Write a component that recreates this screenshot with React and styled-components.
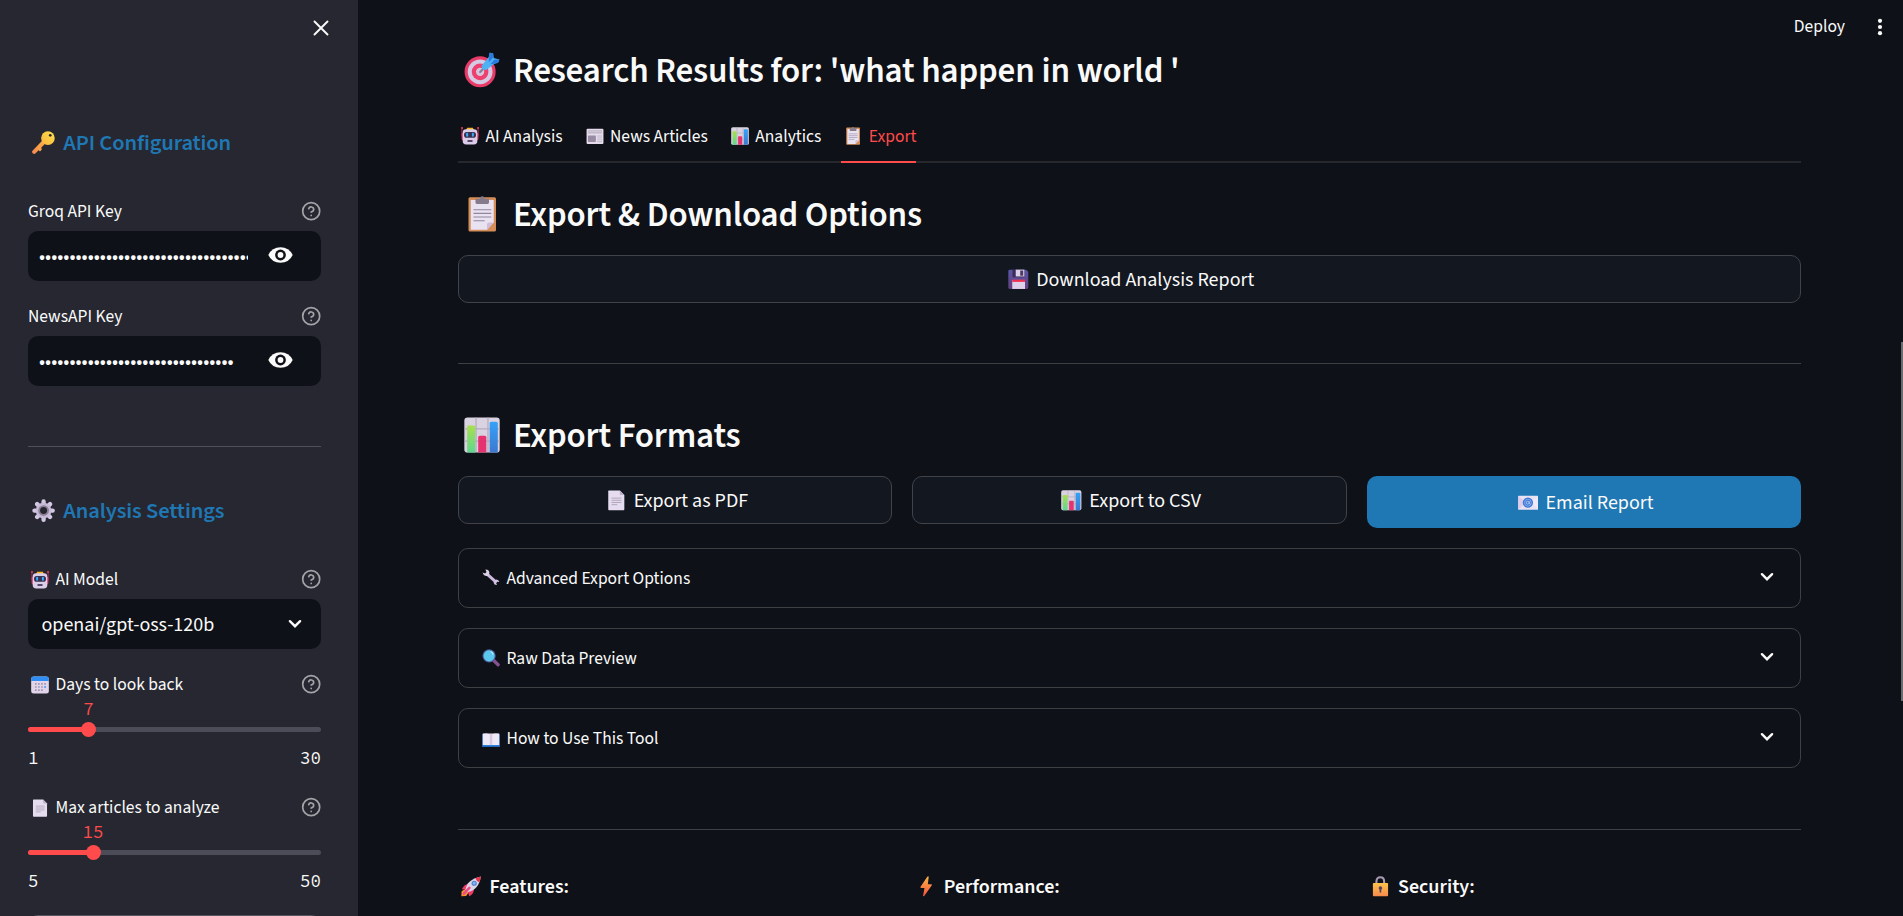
import React from "react";
import styled, { createGlobalStyle } from "styled-components";
import { CircleHelp } from "lucide-react";

const SANS = '"Source Sans Pro", "Source Sans 3", "Noto Sans CJK SC", sans-serif';
const MONO = '"Source Code Pro", "Liberation Mono", monospace';

const GlobalStyle = createGlobalStyle`
  * { box-sizing: border-box; }
  html, body { margin: 0; height: 100%; overflow: hidden; background: #0e1117; }
  body { font-family: ${SANS}; font-size: 20px; color: #fafafa; }
  h2, h3, p { margin: 0; }
  button { font: inherit; color: inherit; }
`;

/* ---------- emoji drawings ---------- */

const Slot = styled.span`
  flex: none;
  display: inline-flex;
  justify-content: center;
  width: 1.37em;
  margin-right: 0.2em;
  margin-bottom: 0.04em;
  svg { display: block; width: 1.03em; height: 1.03em; }
`;

const art = {
  target: (
    <>
      <circle cx="14.3" cy="17.6" r="13.8" fill="#e83b69" />
      <circle cx="14.3" cy="17.6" r="11" fill="#d5cae4" />
      <circle cx="14.3" cy="17.6" r="7.4" fill="#ee3f6e" />
      <circle cx="14.3" cy="17.6" r="3.7" fill="#d5c5dc" />
      <path d="M14.3 17.8 20 12" stroke="#8a7b94" strokeWidth="1.8" strokeLinecap="round" />
      <path d="M15.6 12.2 22 4.4 22.8.6 25.8 1.2 26.4 5.4 31.4 6.6 30.2 9.6 27 10.4 20 15.8Q17.4 16.4 16 14.6Z" fill="#4db2f4" />
      <path d="M22 4.4 22.8.6 25.8 1.2 26.2 4.6 22 9ZM23.4 10.8 27 6.6 31.6 6.8 30.2 9.6 27 10.4Z" fill="#2c7be0" />
    </>
  ),
  robot: (
    <>
      <path d="M1.6 1v15M30.4 1v15" stroke="#b02a55" strokeWidth="1.8" strokeLinecap="round" />
      <circle cx="1.8" cy="1.8" r="1.6" fill="#f23d5e" />
      <circle cx="30.2" cy="1.8" r="1.6" fill="#f23d5e" />
      <rect x="1" y="10" width="30" height="14" rx="3" fill="#d92f60" />
      <path d="M11 1.4h10l2 4H9z" fill="#f9b320" />
      <rect x="3" y="4" width="26" height="27" rx="6" fill="#dacde7" />
      <rect x="5.4" y="9" width="21.2" height="10" rx="4.5" fill="#3c3052" />
      <rect x="9.2" y="10.4" width="3.4" height="7" rx="1.7" fill="#35b0fb" />
      <rect x="19.4" y="10.4" width="3.4" height="7" rx="1.7" fill="#35b0fb" />
      <rect x="11.5" y="23" width="9" height="3.6" rx="1" fill="#59456c" />
    </>
  ),
  news: (
    <>
      <rect x="1" y="3" width="30" height="27" rx="1.8" fill="#e4dcea" />
      <path d="M3.5 7h25M3.5 10.4h25" stroke="#a89cb1" strokeWidth="1.5" />
      <rect x="3.5" y="15" width="14" height="11.5" rx="1" fill="#988ba3" />
      <path d="M20 16h8.5M20 19.4h8.5M20 22.8h8.5M20 26h8.5" stroke="#b7abc0" strokeWidth="1.2" />
    </>
  ),
  chart: (
    <>
      <rect x="0.3" y="0.4" width="31.4" height="31.2" rx="2.8" fill="#d9d2e0" />
      <path d="M10.7.5V31M21.3.5V31M.6 10.6h31M.6 21.4h31" stroke="#b5aabf" strokeWidth="1.1" />
      <path d="M2.8 31.6V9Q2.8 7.6 4.2 7.6H8.6Q10 7.6 10 9V31.6z" fill="url(#barGreen)" />
      <path d="M12.6 31.6V18Q12.6 16.6 14 16.6H18.4Q19.8 16.6 19.8 18V31.6z" fill="#e4336f" />
      <path d="M22.8 31.6V5.6Q22.8 4.2 24.2 4.2H28.6Q30 4.2 30 5.6V31.6z" fill="url(#barBlue)" />
    </>
  ),
  clip: (
    <>
      <rect x="4" y="1" width="24.4" height="30.6" rx="1.4" fill="#d68e59" />
      <path d="M6 3.6h20.4v20L20.4 30H6z" fill="#e9e2f1" />
      <path d="M26.4 23.6h-4.2q-1.8 0-1.8 1.8V30z" fill="#cdbddb" />
      <path d="M8.4 12.2h15.8M8.4 15.4h15.8M8.4 18.6h15.8M8.4 22h10" stroke="#9385a0" strokeWidth="1" />
      <path d="M10.2 2.4h4q.2-2.2 2-2.2t2 2.2h4v3.4q0 1.2-1.2 1.2h-9.6q-1.2 0-1.2-1.2z" fill="#857b8d" />
    </>
  ),
  floppy: (
    <>
      <path d="M.5 3.2Q.5 1 2.7 1H28l3.5 3.4V28.8Q31.5 31 29.3 31H2.7Q.5 31 .5 28.8z" fill="url(#disk)" />
      <path d="M7 1h18.5v10.4q0 1.4-1.4 1.4H8.4q-1.4 0-1.4-1.4z" fill="#3d2b5c" />
      <path d="M12 1h13.4v10.6H12z" fill="#dcd0e6" />
      <rect x="19" y="2.4" width="4.6" height="8" fill="#4a3867" />
      <path d="M6.6 17h19.8v14H6.6z" fill="#dfd0ea" />
      <path d="M6.6 16.6h19.8v3.4H6.6z" fill="#ee2f4f" />
    </>
  ),
  page: (
    <>
      <path d="M4.5.8H21.5L28.5 7.8V30Q28.5 31.4 27.1 31.4H4.9Q3.5 31.4 3.5 30V1.8Q3.5.8 4.5.8z" fill="#e6dcef" />
      <path d="M21.5.8V6.4Q21.5 7.8 22.9 7.8H28.5z" fill="#bdb0c8" />
      <path d="M8.5 12.6h15.5M8.5 16h15.5M8.5 19.4h15.5M8.5 22.8h9" stroke="#a195ac" strokeWidth="1.2" />
    </>
  ),
  email: (
    <>
      <rect x="0.3" y="6" width="31.4" height="21.5" rx="1" fill="#e8e2f3" />
      <path d="M.3 6 12 16.5.3 27.5z" fill="#dccbe9" />
      <path d="M31.7 6 20 16.5 31.7 27.5z" fill="#f1e8f8" />
      <circle cx="15.4" cy="16.6" r="8" fill="#3f7bd8" />
      <circle cx="15.4" cy="16.6" r="5.3" fill="none" stroke="#9db8ee" strokeWidth="1" />
      <circle cx="15" cy="16.6" r="2.2" fill="none" stroke="#c9d7f7" strokeWidth="1.1" />
      <path d="M17.6 14.2v3.2q.2 2 2 1.6" fill="none" stroke="#c9d7f7" strokeWidth="1" />
    </>
  ),
  wrench: (
    <>
      <path d="M9.5 9.5 24.5 23" stroke="#cdbbe0" strokeWidth="5.2" />
      <path d="M1 6.2 5.4 7.8 8 5.2 6 .9Q11.5.6 13.2 5.2 13.8 10.5 9.6 12.4 3.2 13.2 1 6.2z" fill="#ded2e9" />
      <path d="M30.8 23 27.2 22.6 25.2 25.2 26.6 28.6Q21.6 29 20.6 24.6 20.8 19.6 25.4 18.6 30 18.8 30.8 23z" fill="#d4c3e6" />
    </>
  ),
  search: (
    <>
      <path d="M20 19.5 28.6 28" stroke="#84508f" strokeWidth="5.8" strokeLinecap="round" />
      <circle cx="12.6" cy="12.2" r="11.8" fill="#4b609c" />
      <circle cx="12.6" cy="12.2" r="9.8" fill="#5cc7ec" />
      <path d="M16 5q3 1.2 3.6 4.4" stroke="#b9ecf9" strokeWidth="2" strokeLinecap="round" fill="none" />
    </>
  ),
  book: (
    <g transform="translate(0 2.6)">
      <path d="M.5 6.5h31v23H.5z" fill="#3288e0" />
      <path d="M.5 27h14q1.5 2 3 0H31.5v2.5H.5z" fill="#2467b8" />
      <path d="M1.4 5.6Q9 4.5 16 6 23 4.5 30.6 5.6V26H1.4z" fill="#efe9f7" />
      <path d="M13.8 5.4 16 6l2.2-.6V26h-4.4z" fill="#d5cae1" />
    </g>
  ),
  rocket: (
    <>
      <path d="M7 20 1 23.6.5 31.5 8 31 12.5 25z" fill="#f5912e" />
      <path d="M12 12.5Q5 12.5 1.4 20.6L8 21.5z" fill="#ee3b66" />
      <path d="M20 20.5Q20.5 27.5 12.6 31.6L10.8 24.5z" fill="#ee3b66" />
      <path d="M6.8 22.5Q8.5 5.5 30.8.8 28 21.5 9.6 25.4z" fill="#ddd3e7" />
      <path d="M22.5 3.6Q26.5 1.4 31 .7 30.5 5.8 28.2 9.6 24 8.5 22.5 3.6z" fill="#e8354e" />
      <circle cx="20.5" cy="11.2" r="4" fill="#4d83cf" />
      <circle cx="20.5" cy="11.2" r="2.3" fill="#7fb5ef" />
      <path d="M4.5 27.5 13 18.6" stroke="#ee4c86" strokeWidth="4" strokeLinecap="round" />
    </>
  ),
  bolt: <path d="M17.8.6 6.8 17.2Q6.5 18.4 7.8 18.5H13.2L10.8 31.4 12.8 31 24.6 14.4Q25 13 23.6 12.9H18.4L19.8.8z" fill="url(#boltFill)" />,
  lock: (
    <>
      <path d="M10 14V8.5Q10 2 16 2T22 8.5V14" fill="none" stroke="#a79bb2" strokeWidth="3.2" />
      <rect x="4.5" y="10.8" width="23.6" height="20.6" rx="1.4" fill="url(#lockFill)" />
      <circle cx="16.2" cy="18.6" r="2.8" fill="#56425f" />
      <rect x="14.9" y="19.5" width="2.6" height="6.5" rx="1.2" fill="#56425f" />
    </>
  ),
  key: (
    <>
      <path d="M3 28.8 17 14.5" stroke="url(#keyFill)" strokeWidth="5.6" strokeLinecap="round" />
      <path d="M7.5 25 11 28.2 13.6 25.4 12.4 21.6 15.6 20.4 14.5 17z" fill="#f9a048" />
      <circle cx="22" cy="9.8" r="9.4" fill="url(#keyHead)" />
      <circle cx="25.2" cy="6" r="1.9" fill="#272730" />
    </>
  ),
  gear: (
    <>
      <g stroke="#d3c8e2" strokeWidth="6" strokeLinecap="round">
        <path d="M16 3.4V28.6M3.4 16H28.6M7.1 7.1 24.9 24.9M24.9 7.1 7.1 24.9" />
      </g>
      <circle cx="16" cy="16" r="10.8" fill="#c7bbd6" />
      <circle cx="16" cy="16" r="7.4" fill="#8d8299" />
      <circle cx="16" cy="16" r="4.8" fill="#272730" />
    </>
  ),
  calendar: (
    <>
      <rect x="0.3" y="0.8" width="31.4" height="30.4" rx="4.5" fill="#e0d5e9" />
      <path d="M.3 9V5.3Q.3.8 4.8.8H27.2Q31.7.8 31.7 5.3V9z" fill="#2f8df3" />
      <path d="M7 12.5h3v3H7zM12.5 12.5h3v3h-3zM18 12.5h3v3h-3zM23.5 12.5h3v3h-3zM7 18h3v3H7zM12.5 18h3v3h-3zM18 18h3v3h-3zM7 23.5h3v3H7zM12.5 23.5h3v3h-3zM18 23.5h3v3h-3z" fill="#a496b3" />
      <path d="M23.5 18h3v3h-3z" fill="#2f8df3" />
    </>
  ),
};

const Emoji = ({ name }) => (
  <Slot>
    <svg viewBox="0 0 32 32" fill="none" aria-hidden="true">{art[name]}</svg>
  </Slot>
);

const HiddenDefs = styled.svg`position: absolute; width: 0; height: 0;`;

const Gradients = () => (
  <HiddenDefs>
    <defs>
      <linearGradient id="barGreen" x1="0" y1="0" x2="0" y2="1"><stop stopColor="#a8e04e" /><stop offset="1" stopColor="#5fd68f" /></linearGradient>
      <linearGradient id="barBlue" x1="0" y1="0" x2="0" y2="1"><stop stopColor="#34a2f8" /><stop offset="1" stopColor="#3d78cf" /></linearGradient>
      <linearGradient id="disk" x1="0" y1="0" x2="0" y2="1"><stop stopColor="#5a55a4" /><stop offset="1" stopColor="#63407f" /></linearGradient>
      <linearGradient id="boltFill" x1="0" y1="0" x2="0" y2="1"><stop stopColor="#f9b447" /><stop offset="1" stopColor="#f4513c" /></linearGradient>
      <linearGradient id="lockFill" x1="0" y1="0" x2="0" y2="1"><stop stopColor="#fcc44a" /><stop offset="1" stopColor="#f6894c" /></linearGradient>
      <linearGradient id="keyFill" gradientUnits="userSpaceOnUse" x1="2" y1="30" x2="18" y2="14"><stop stopColor="#f58a52" /><stop offset="1" stopColor="#fbb243" /></linearGradient>
      <linearGradient id="keyHead" x1="0" y1="1" x2="1" y2="0"><stop stopColor="#fbb441" /><stop offset="1" stopColor="#fde04a" /></linearGradient>
    </defs>
  </HiddenDefs>
);

/* ---------- line icons ---------- */

const Chevron = () => (
  <svg width="14" height="10" viewBox="0 0 14 10" fill="none">
    <path d="M1.9 2.2 7 7.2 12.1 2.2" stroke="#fafafa" strokeWidth="2.4" strokeLinecap="round" />
  </svg>
);

const Eye = () => (
  <svg width="25" height="16" viewBox="0 0 25 16">
    <path d="M.3 8Q4 .2 12.5.2T24.7 8Q21 15.8 12.5 15.8T.3 8z" fill="#fafafa" />
    <circle cx="12.5" cy="8" r="5.4" fill="#0e1117" />
    <circle cx="12.5" cy="8" r="2.9" fill="#fafafa" />
  </svg>
);

const Close = () => (
  <svg width="18" height="18" viewBox="0 0 18 18" fill="none">
    <path d="M2.5 2.5 15.5 15.5M15.5 2.5 2.5 15.5" stroke="#fafafa" strokeWidth="1.9" strokeLinecap="round" />
  </svg>
);

const Dots = () => (
  <svg width="6" height="20" viewBox="0 0 6 20" fill="#fafafa">
    <circle cx="3" cy="3.8" r="2.1" />
    <circle cx="3" cy="10" r="2.1" />
    <circle cx="3" cy="16.2" r="2.1" />
  </svg>
);

/* ---------- page ---------- */

const Page = styled.div`
  display: flex;
  height: 916px;
  overflow: hidden;
`;

const Sidebar = styled.aside`
  flex: none;
  width: 358px;
  height: 916px;
  overflow: hidden;
  padding: 0 37px 0 28px;
  background: #262730;
`;

const SidebarTop = styled.div`
  display: flex;
  justify-content: flex-end;
  height: 128px;
  padding-top: 19px;
  margin-right: -9px;
`;

const SidebarTitle = styled.h3`
  display: flex;
  align-items: center;
  height: 30px;
  line-height: 30px;
  font-size: 22.5px;
  font-weight: 600;
  letter-spacing: -0.005em;
  color: #1f77b4;
`;

const Field = styled.div`
  margin-top: ${(p) => p.$gap}px;
`;

const FieldLabel = styled.div`
  display: flex;
  align-items: center;
  justify-content: space-between;
  height: 24px;
  line-height: 24px;
  font-size: 17.5px;
`;

const LabelText = styled.span`
  display: flex;
  align-items: center;
  padding-top: 2px;
`;

const HelpMark = styled(CircleHelp)`
  width: 20.4px;
  height: 20.4px;
  color: #a3a3a8;
`;

const InputBox = styled.div`
  display: flex;
  align-items: center;
  height: 50px;
  margin-top: 8px;
  padding-left: 11px;
  border-radius: 10px;
  background: #0e1117;
`;

const Secret = styled.div`
  width: 209px;
  padding-top: 2px;
  overflow: hidden;
  white-space: nowrap;
  line-height: 30px;
`;

const EyeButton = styled.span`
  display: flex;
  margin: 0 0 2px 20px;
`;

const SelectBox = styled(InputBox)`
  justify-content: space-between;
  padding: 0 19px 0 13.5px;
`;

const SelectValue = styled.span`
  padding-top: 2px;
`;

const SidebarRule = styled.hr`
  height: 1px;
  margin: 60px 0 49px;
  border: 0;
  background: #4e4f57;
`;

const Slider = styled.div`
  position: relative;
  height: 65px;
  padding-top: 31px;
`;

const Track = styled.div`
  height: 5px;
  border-radius: 3px;
  background: #4b4c57;
`;

const Filled = styled.div`
  position: relative;
  height: 5px;
  border-radius: 3px;
  background: #ff4b4b;
`;

const Thumb = styled.span`
  position: absolute;
  top: -5px;
  right: -7.5px;
  width: 15px;
  height: 15px;
  border-radius: 50%;
  background: #ff4b4b;
`;

const ThumbValue = styled.span`
  position: absolute;
  right: 0;
  bottom: 11px;
  transform: translateX(50%);
  font: 17.5px/24px ${MONO};
  color: #ff4b4b;
`;

const Range = styled.div`
  display: flex;
  justify-content: space-between;
  margin-top: 14px;
  font: 17.5px/24px ${MONO};
`;

const NextButton = styled.div`
  height: 40px;
  margin-top: 31px;
  border: 1px solid #55565f;
  border-radius: 10px;
`;

const Main = styled.main`
  position: relative;
  flex: 1;
  height: 916px;
  overflow: hidden;
  padding: 48px 102px 0 100px;
  background: #0e1117;
`;

const Toolbar = styled.div`
  position: absolute;
  top: 14px;
  right: 20px;
  display: flex;
  align-items: center;
  gap: 32px;
  height: 25px;
  font-size: 17.5px;
`;

const ScrollThumb = styled.div`
  position: absolute;
  top: 342px;
  right: 0;
  width: 2px;
  height: 359px;
  background: #6b6c70;
`;

const Heading = styled.h2`
  display: flex;
  align-items: center;
  height: 42px;
  margin-top: ${(p) => p.$gap}px;
  padding-top: 3px;
  line-height: 42px;
  font-size: 35px;
  font-weight: 600;
  letter-spacing: -0.005em;
  white-space: pre;
`;

const Tabs = styled.nav`
  display: flex;
  gap: 20px;
  height: 51px;
  margin-top: 22px;
  box-shadow: inset 0 -2px #26282d;
`;

const Tab = styled.div`
  display: flex;
  align-items: center;
  padding-bottom: 3px;
  font-size: 17.5px;
  color: ${(p) => (p.$active ? "#ff4b4b" : "#fafafa")};
  box-shadow: ${(p) => (p.$active ? "inset 0 -2px #ff4b4b" : "none")};
`;

const Button = styled.button`
  display: flex;
  align-items: center;
  justify-content: center;
  width: 100%;
  height: ${(p) => (p.$primary ? 52 : 48)}px;
  padding: 2px 0 0;
  border: ${(p) => (p.$primary ? "0" : "1px solid #414349")};
  border-radius: 10px;
  background: ${(p) => (p.$primary ? "#1f77b4" : "#131720")};
  color: #fafafa;
`;

const DownloadRow = styled.div`
  margin-top: 21px;
`;

const ButtonRow = styled.div`
  display: grid;
  grid-template-columns: repeat(3, 1fr);
  align-items: start;
  gap: 20px;
  margin-top: 21px;
`;

const Rule = styled.hr`
  height: 1px;
  margin: ${(p) => p.$gap}px 0 0;
  border: 0;
  background: #3e4044;
`;

const Expanders = styled.div`
  display: grid;
  gap: 20px;
  margin-top: 20px;
`;

const Expander = styled.div`
  display: flex;
  align-items: center;
  justify-content: space-between;
  height: 60px;
  padding: 0 26px 2px 20px;
  border: 1px solid #3e4044;
  border-radius: 10px;
  font-size: 17.5px;
`;

const Footer = styled.div`
  display: grid;
  grid-template-columns: repeat(3, 1fr);
  gap: 20px;
  margin-top: 42px;
`;

const FooterTitle = styled.p`
  display: flex;
  align-items: center;
  height: 30px;
  line-height: 30px;
  font-weight: 600;
`;

const Label = ({ icon, children }) => (
  <FieldLabel>
    <LabelText>{icon && <Emoji name={icon} />}{children}</LabelText>
    <HelpMark />
  </FieldLabel>
);

const SecretField = ({ label, count, gap }) => (
  <Field $gap={gap}>
    <Label>{label}</Label>
    <InputBox>
      <Secret>{"•".repeat(count)}</Secret>
      <EyeButton><Eye /></EyeButton>
    </InputBox>
  </Field>
);

const SliderField = ({ icon, label, min, max, value, gap }) => (
  <Field $gap={gap}>
    <Label icon={icon}>{label}</Label>
    <Slider>
      <Track>
        <Filled style={{ width: `${((value - min) / (max - min)) * 100}%` }}>
          <ThumbValue>{value}</ThumbValue>
          <Thumb />
        </Filled>
      </Track>
      <Range><span>{min}</span><span>{max}</span></Range>
    </Slider>
  </Field>
);

const tabs = [
  ["robot", "AI Analysis"],
  ["news", "News Articles"],
  ["chart", "Analytics"],
  ["clip", "Export"],
];

const expanders = [
  ["wrench", "Advanced Export Options"],
  ["search", "Raw Data Preview"],
  ["book", "How to Use This Tool"],
];

const footers = [
  ["rocket", "Features:"],
  ["bolt", "Performance:"],
  ["lock", "Security:"],
];

export default function App() {
  return (
    <Page>
      <GlobalStyle />
      <Gradients />
      <Sidebar>
        <SidebarTop><Close /></SidebarTop>
        <SidebarTitle><Emoji name="key" />API Configuration</SidebarTitle>
        <SecretField label="Groq API Key" count={35} gap={41} />
        <SecretField label="NewsAPI Key" count={32} gap={23} />
        <SidebarRule />
        <SidebarTitle><Emoji name="gear" />Analysis Settings</SidebarTitle>
        <Field $gap={41}>
          <Label icon="robot">AI Model</Label>
          <SelectBox><SelectValue>openai/gpt-oss-120b</SelectValue><Chevron /></SelectBox>
        </Field>
        <SliderField icon="calendar" label="Days to look back" min={1} max={30} value={7} gap={23} />
        <SliderField icon="page" label="Max articles to analyze" min={5} max={50} value={15} gap={34} />
        <NextButton />
      </Sidebar>
      <Main>
        <Toolbar>Deploy<Dots /></Toolbar>
        <Heading $gap={0}><Emoji name="target" />{"Research Results for: 'what happen in world '"}</Heading>
        <Tabs>
          {tabs.map(([icon, text]) => (
            <Tab key={text} $active={text === "Export"}><Emoji name={icon} />{text}</Tab>
          ))}
        </Tabs>
        <Heading $gap={29}><Emoji name="clip" />{"Export & Download Options"}</Heading>
        <DownloadRow>
          <Button><Emoji name="floppy" />Download Analysis Report</Button>
        </DownloadRow>
        <Rule $gap={60} />
        <Heading $gap={49}><Emoji name="chart" />Export Formats</Heading>
        <ButtonRow>
          <Button><Emoji name="page" />Export as PDF</Button>
          <Button><Emoji name="chart" />Export to CSV</Button>
          <Button $primary><Emoji name="email" />Email Report</Button>
        </ButtonRow>
        <Expanders>
          {expanders.map(([icon, text]) => (
            <Expander key={text}>
              <LabelText><Emoji name={icon} />{text}</LabelText>
              <Chevron />
            </Expander>
          ))}
        </Expanders>
        <Rule $gap={61} />
        <Footer>
          {footers.map(([icon, text]) => (
            <FooterTitle key={text}><Emoji name={icon} />{text}</FooterTitle>
          ))}
        </Footer>
        <ScrollThumb />
      </Main>
    </Page>
  );
}
